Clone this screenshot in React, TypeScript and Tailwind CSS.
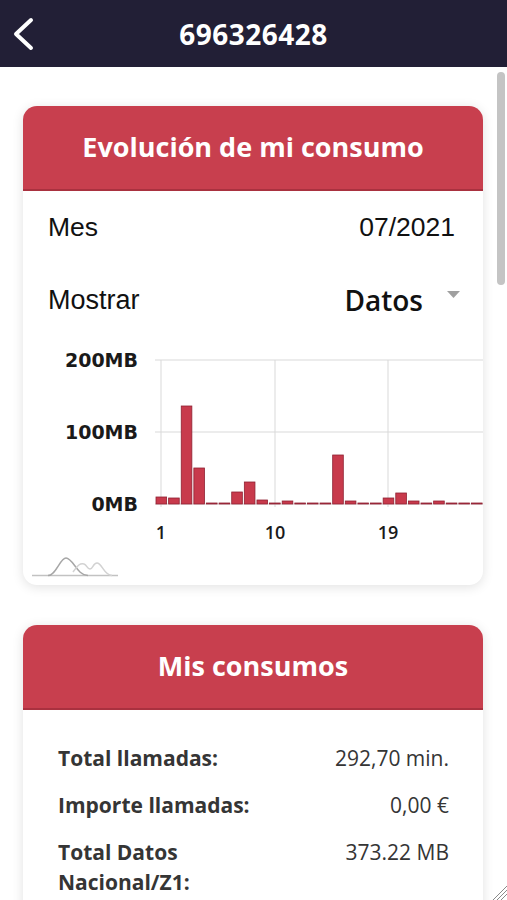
import React from "react";

// daily data usage in px (0.72px per MB)
const bars: number[] = [7, 6, 98, 36, 1, 1, 12, 22, 4, 1, 3, 1, 1, 1, 49, 3, 1, 1, 6, 11, 3, 1, 3, 1, 1, 1];

const heading = { fontFamily: '"Open Sans", sans-serif' };
const arial = { fontFamily: '"Liberation Sans", sans-serif' };

const Chart = () => {
  const left = 132;
  const step = 12.62;
  const base = 169;
  return (
    <svg width="460" height="210" className="block">
      {[25, 97, 169].map((y) => (
        <line key={y} x1={left} x2={460} y1={y} y2={y} stroke="#d9d9d9" strokeWidth="1" />
      ))}
      {[138, 252, 365].map((x) => (
        <line key={x} x1={x} x2={x} y1={25} y2={172} stroke="#d9d9d9" strokeWidth="1" />
      ))}
      {bars.map((h, i) => (
        <rect
          key={i}
          x={left + i * step + 1}
          y={base - h}
          width={step - 2}
          height={h}
          fill="#c83a4c"
          stroke="#8f2233"
          strokeWidth="0.8"
        />
      ))}
      <g fontFamily='"DejaVu Sans", sans-serif' fontWeight="700" fontSize="19" fill="#1a1a1a" textAnchor="end">
        <text x="115" y="32">200MB</text>
        <text x="115" y="104">100MB</text>
        <text x="115" y="176">0MB</text>
      </g>
      <g fontFamily='"Open Sans", sans-serif' fontWeight="600" fontSize="18" fill="#1a1a1a" textAnchor="middle">
        <text x="138" y="204">1</text>
        <text x="252" y="204">10</text>
        <text x="365" y="204">19</text>
      </g>
    </svg>
  );
};

const MountainIcon = () => (
  <svg width="86" height="22" viewBox="0 0 86 22">
    <path d="M0 19.5H86" stroke="#c2c2c2" strokeWidth="1.5" fill="none" />
    <path d="M16 19.5C24 19.5 28 2 34 2C41 2 45 19.5 56 19.5" stroke="#a6a6a6" strokeWidth="1.5" fill="none" />
    <path d="M41 16C46 9 48 7 52 8C55 9 55 13 58 13C61 13 61 7 65 7C70 7 72 19.5 80 19.5" stroke="#d2d2d2" strokeWidth="1.5" fill="none" />
  </svg>
);

const Row = ({ label, value }: { label: string; value: string }) => (
  <div className="flex justify-between text-[21px] leading-[30px] text-[#353535]" style={heading}>
    <span className="w-[215px] font-bold">{label}</span>
    <span>{value}</span>
  </div>
);

export default function App() {
  return (
    <div className="relative h-[900px] w-[507px] overflow-hidden bg-white">
      <div className="flex h-[67px] items-center bg-[#221f36]">
        <svg width="24" height="36" viewBox="0 0 24 36" className="ml-[11px] shrink-0">
          <path d="M20 4L5 18L20 32" stroke="#fff" strokeWidth="4" strokeLinecap="round" strokeLinejoin="round" fill="none" />
        </svg>
        <div className="flex-1 pr-[35px] text-center text-[28px] font-bold tracking-[0.5px] text-white" style={heading}>
          696326428
        </div>
      </div>

      <div className="flex">
        <div className="flex-1 pl-[23px] pr-[12px]">
          <div className="mt-[39px] rounded-[14px] bg-white shadow-[0_2px_12px_rgba(0,0,0,0.12)]">
            <div
              className="flex h-[85px] items-center justify-center rounded-t-[14px] border-b-2 border-[#a9313f] bg-[#c83f4e] text-[27px] font-bold text-white"
              style={heading}
            >
              Evolución de mi consumo
            </div>
            <div className="flex h-[74px] items-center justify-between pl-[25px] pr-[28px] text-[26.5px] text-[#111]" style={arial}>
              <span>Mes</span>
              <span>07/2021</span>
            </div>
            <div className="flex h-[70px] items-center justify-between pl-[25px] pr-[23px] text-[#111]">
              <span className="text-[27px]" style={arial}>
                Mostrar
              </span>
              <div className="flex items-center">
                <span className="text-[28px] font-semibold" style={heading}>
                  Datos
                </span>
                <svg width="13" height="8" viewBox="0 0 13 8" className="mb-[10px] ml-[24px]">
                  <path d="M0 0H13L6.5 7Z" fill="#a0a0a0" />
                </svg>
              </div>
            </div>
            <Chart />
            <div className="pb-[7px] pl-[9px] pt-[11px]">
              <MountainIcon />
            </div>
          </div>

          <div className="mt-[40px] rounded-[14px] bg-white shadow-[0_2px_12px_rgba(0,0,0,0.12)]">
            <div
              className="flex h-[85px] items-center justify-center rounded-t-[14px] border-b-2 border-[#a9313f] bg-[#c83f4e] text-[27px] font-bold text-white"
              style={heading}
            >
              Mis consumos
            </div>
            <div className="flex flex-col gap-[17px] pb-[40px] pl-[35px] pr-[34px] pt-[33px]">
              <Row label="Total llamadas:" value="292,70 min." />
              <Row label="Importe llamadas:" value="0,00 €" />
              <Row label="Total Datos Nacional/Z1:" value="373.22 MB" />
            </div>
          </div>
        </div>

        <div className="w-[12px] shrink-0">
          <div className="ml-[2px] mt-[5px] h-[213px] w-[8px] rounded-full bg-[#c4c4c4]" />
        </div>
      </div>

      <svg width="16" height="16" viewBox="0 0 16 16" className="absolute bottom-0 right-0">
        <path d="M16 2L2 16M16 6L6 16M16 10L10 16" stroke="#8a8a8a" strokeWidth="1" />
      </svg>
    </div>
  );
}
